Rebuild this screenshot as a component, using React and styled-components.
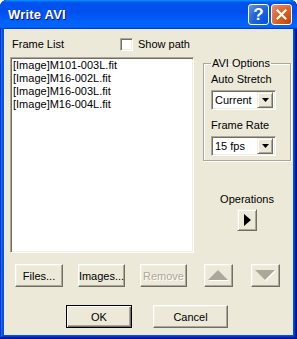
import React from 'react';
import styled, { createGlobalStyle } from 'styled-components';

const Global = createGlobalStyle`
  html, body { margin: 0; padding: 0; background: #ffffff; }
  body { font-family: "Liberation Sans", Arial, sans-serif; font-size: 11px; color: #000; }
  * { box-sizing: border-box; }
`;

const Window = styled.div`
  width: 297px;
  height: 339px;
  display: flex;
  flex-direction: column;
  background: #0054e3;
  border-radius: 7px 7px 0 0;
  overflow: hidden;
  box-shadow: inset -1px -1px #00138c, inset 1px 1px #0831d9, inset -2px -2px #001ea0,
    inset 2px 2px #166aee, inset -3px -3px #003bda, inset 3px 3px #0855dd;
`;

const TitleBar = styled.div`
  height: 29px;
  flex: 0 0 29px;
  display: flex;
  align-items: center;
  padding: 0 5px 0 8px;
  background: linear-gradient(180deg, #0997ff 0%, #0053ee 8%, #0050ee 40%, #0066ff 88%, #0066ff 93%, #005bff 95%, #003dd7 96%, #003dd7 100%);
  border-radius: 7px 7px 0 0;
`;

const Title = styled.div`
  flex: 1;
  font-weight: bold;
  font-size: 13px;
  color: #fff;
  text-shadow: 1px 1px #0f1089;
  letter-spacing: 0.2px;
`;

const TitleButton = styled.div`
  width: 21px;
  height: 21px;
  margin-left: ${p => p.$gap || 0}px;
  border: 1px solid #fff;
  border-radius: 3px;
  display: flex;
  align-items: center;
  justify-content: center;
  background: ${p => p.$close
    ? 'radial-gradient(circle at 90% 90%, #cc4600 0%, #dc6527 55%, #e9917a 100%)'
    : 'radial-gradient(circle at 90% 90%, #0054e9 0%, #2263d5 55%, #6696eb 100%)'};
  color: #fff;
  font-weight: bold;
  font-size: 16px;
`;

const Body = styled.div`
  flex: 1;
  margin: 0 4px 4px 4px;
  background: #ece9d8;
  display: flex;
  flex-direction: column;
`;

const TopArea = styled.div`
  display: flex;
  padding-left: 6px;
`;

const LeftCol = styled.div`
  width: 184px;
  display: flex;
  flex-direction: column;
`;

const Header = styled.div`
  height: 28px;
  display: flex;
  align-items: flex-start;
  padding: 9px 0 0 2px;
  line-height: 13px;
`;

const HeaderLabel = styled.span`
  width: 108px;
`;

const CheckBox = styled.span`
  width: 13px;
  height: 13px;
  background: #fff;
  border: 1px solid;
  border-color: #aca899 #fff #fff #aca899;
  box-shadow: inset 1px 1px #716f64, inset -1px -1px #f1efe2;
  margin-right: 5px;
`;

const ListBox = styled.div`
  width: 184px;
  height: 196px;
  background: #fff;
  border: 1px solid;
  border-color: #aca899 #fff #fff #aca899;
  box-shadow: inset 1px 1px #716f64, inset -1px -1px #f1efe2;
  padding: 1px 2px;
`;

const ListItem = styled.div`
  height: 13px;
  line-height: 13px;
  white-space: nowrap;
`;

const RightCol = styled.div`
  margin-left: 9px;
  width: 88px;
  display: flex;
  flex-direction: column;
  align-items: center;
`;

const GroupBox = styled.fieldset`
  margin: 28px 0 0 0;
  width: 88px;
  height: 104px;
  border: 1px solid #aca899;
  box-shadow: 1px 1px #fff, inset 1px 1px #fff;
  padding: 0 0 0 7px;
  display: flex;
  flex-direction: column;
`;

const Legend = styled.legend`
  padding: 0 1px;
  margin-left: 0;
  line-height: 13px;
`;

const FieldLabel = styled.div`
  line-height: 13px;
  margin-top: ${p => p.$top}px;
`;

const Combo = styled.div`
  width: 65px;
  height: 20px;
  margin-top: 4px;
  background: #fff;
  border: 1px solid;
  border-color: #aca899 #fff #fff #aca899;
  box-shadow: inset 1px 1px #716f64, inset -1px -1px #f1efe2;
  display: flex;
  align-items: center;
  padding: 2px 2px 2px 3px;
`;

const ComboText = styled.span`
  flex: 1;
  line-height: 14px;
`;

const RaisedBox = styled.span`
  background: #ece9d8;
  border: 1px solid;
  border-color: #f1efe2 #716f64 #716f64 #f1efe2;
  box-shadow: inset 1px 1px #fff, inset -1px -1px #aca899;
  display: flex;
  align-items: center;
  justify-content: center;
`;

const DropButton = styled(RaisedBox)`
  width: 16px;
  height: 16px;
`;

const OpsLabel = styled.div`
  margin-top: 32px;
  line-height: 13px;
  text-align: center;
`;

const OpsButton = styled(RaisedBox)`
  width: 20px;
  height: 22px;
  margin-top: 3px;
`;

const ButtonRow = styled.div`
  display: flex;
  margin-top: ${p => p.$top}px;
  padding-left: ${p => p.$left}px;
`;

const PushButton = styled.button`
  width: ${p => p.$w}px;
  height: 23px;
  margin: 0 0 0 ${p => p.$gap || 0}px;
  padding: 0;
  font-family: "Liberation Sans", Arial, sans-serif;
  font-size: 11px;
  color: ${p => (p.$disabled ? '#aca899' : '#000')};
  text-shadow: ${p => (p.$disabled ? '1px 1px #fff' : 'none')};
  background: #ece9d8;
  border: 1px solid;
  border-color: #fff #716f64 #716f64 #fff;
  box-shadow: inset -1px -1px #aca899, inset 1px 1px #f1efe2;
  display: flex;
  align-items: center;
  justify-content: center;
  outline: ${p => (p.$default ? '1px solid #000' : 'none')};
  outline-offset: 0;
`;

const DefaultButton = styled(PushButton)`
  border-color: #000;
  box-shadow: inset 1px 1px #fff, inset -1px -1px #716f64, inset -2px -2px #aca899;
  outline: none;
`;

const ArrowDown = () => (
  <svg width="7" height="4" viewBox="0 0 7 4"><path d="M0 0h7L3.5 4z" fill="#000" /></svg>
);

const Play = () => (
  <svg width="7" height="12" viewBox="0 0 7 12"><path d="M0 0L7 6L0 12z" fill="#000" /></svg>
);

const BigArrow = ({ up }) => (
  <svg width="22" height="12" viewBox="0 0 22 12">
    {up ? (
      <>
        <path d="M1 11L11 1L21 11z" fill="#fff" />
        <path d="M0 10L10 0L20 10z" fill="#aca899" />
      </>
    ) : (
      <>
        <path d="M1 1L21 1L11 11z" fill="#fff" />
        <path d="M0 0L20 0L10 10z" fill="#aca899" />
      </>
    )}
  </svg>
);

const HelpGlyph = styled.span`
  font-family: "Liberation Sans", Arial, sans-serif;
  font-size: 17px;
  font-weight: bold;
  line-height: 17px;
`;

const CloseX = () => (
  <svg width="11" height="11" viewBox="0 0 11 11">
    <path d="M1.5 1.5L9.5 9.5M9.5 1.5L1.5 9.5" stroke="#fff" strokeWidth="2.2" strokeLinecap="square" />
  </svg>
);

const files = ['[Image]M101-003L.fit', '[Image]M16-002L.fit', '[Image]M16-003L.fit', '[Image]M16-004L.fit'];

export default function App() {
  return (
    <>
      <Global />
      <Window>
        <TitleBar>
          <Title>Write AVI</Title>
          <TitleButton><HelpGlyph>?</HelpGlyph></TitleButton>
          <TitleButton $close $gap={2}><CloseX /></TitleButton>
        </TitleBar>
        <Body>
          <TopArea>
            <LeftCol>
              <Header>
                <HeaderLabel>Frame List</HeaderLabel>
                <CheckBox />
                <span>Show path</span>
              </Header>
              <ListBox>
                {files.map(f => <ListItem key={f}>{f}</ListItem>)}
              </ListBox>
            </LeftCol>
            <RightCol>
              <GroupBox>
                <Legend>AVI Options</Legend>
                <FieldLabel $top={3}>Auto Stretch</FieldLabel>
                <Combo>
                  <ComboText>Current</ComboText>
                  <DropButton><ArrowDown /></DropButton>
                </Combo>
                <FieldLabel $top={9}>Frame Rate</FieldLabel>
                <Combo>
                  <ComboText>15 fps</ComboText>
                  <DropButton><ArrowDown /></DropButton>
                </Combo>
              </GroupBox>
              <OpsLabel>Operations</OpsLabel>
              <OpsButton><Play /></OpsButton>
            </RightCol>
          </TopArea>
          <ButtonRow $top={11} $left={11}>
            <PushButton $w={48}>Files...</PushButton>
            <PushButton $w={47} $gap={15}>Images...</PushButton>
            <PushButton $w={47} $gap={15} $disabled>Remove</PushButton>
            <PushButton $w={29} $gap={17}><BigArrow up /></PushButton>
            <PushButton $w={29} $gap={18}><BigArrow /></PushButton>
          </ButtonRow>
          <ButtonRow $top={18} $left={62}>
            <DefaultButton $w={66}>OK</DefaultButton>
            <PushButton $w={75} $gap={21}>Cancel</PushButton>
          </ButtonRow>
        </Body>
      </Window>
    </>
  );
}
